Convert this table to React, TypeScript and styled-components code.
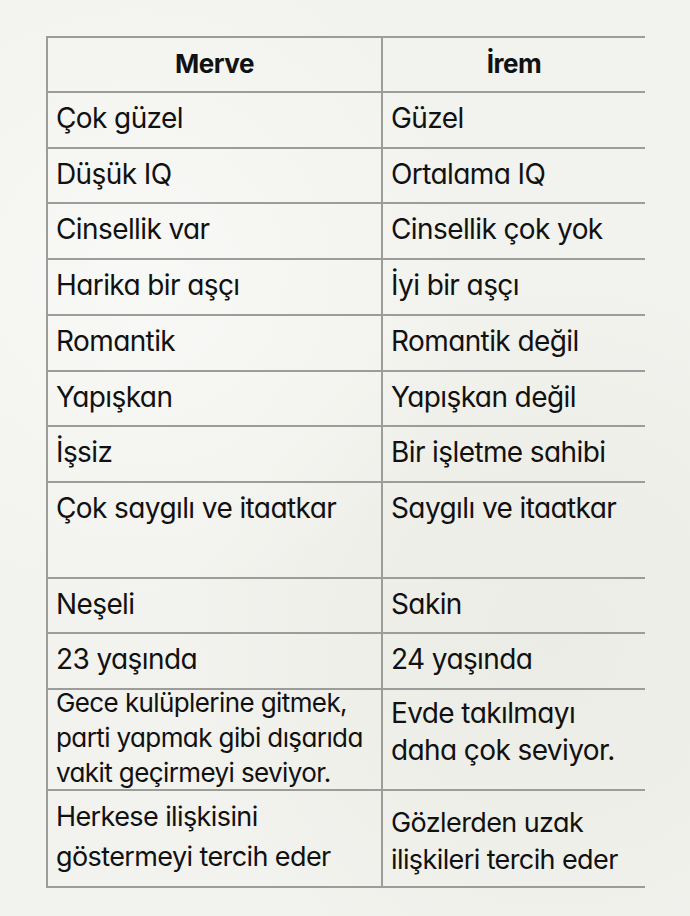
import * as React from 'react'
import styled, { createGlobalStyle } from 'styled-components'

const GlobalStyle = createGlobalStyle`
  html, body {
    margin: 0;
    padding: 0;
    background: #f2f2ee;
  }
  body {
    font-family: Inter, "Noto Sans", sans-serif;
    font-feature-settings: "cv11" 1;
    color: #111111;
  }
`

const Page = styled.div`
  width: 690px;
  height: 916px;
  padding: 36px 0 0 46px;
  box-sizing: border-box;
  background:
    radial-gradient(circle at 20% 30%, rgba(255, 255, 255, 0.5), transparent 40%),
    radial-gradient(circle at 80% 70%, rgba(230, 230, 222, 0.5), transparent 45%),
    #f2f2ee;
`

const Table = styled.div`
  width: 599px;
  display: flex;
  flex-direction: column;
  border-top: 2px solid #9c9c9a;
  border-left: 2px solid #9c9c9a;
  box-sizing: border-box;
`

const Row = styled.div<{ $height: number }>`
  display: grid;
  grid-template-columns: 333px 1fr;
  height: ${({ $height }) => $height}px;
  border-bottom: 2px solid #9c9c9a;
  box-sizing: border-box;
`

const Cell = styled.div`
  padding: 0 4px 0 8px;
  & + & {
    border-left: 2px solid #9c9c9a;
  }
`

const Lines = styled.div<{ $size: number; $lineHeight: number; $offset: number }>`
  margin-top: ${({ $offset }) => $offset}px;
  font-size: ${({ $size }) => $size}px;
  line-height: ${({ $lineHeight }) => $lineHeight}px;
  letter-spacing: -0.6px;
  white-space: pre-line;
`

const HeaderCell = styled.div`
  display: flex;
  align-items: center;
  justify-content: center;
  font-size: 26px;
  font-weight: 700;
  letter-spacing: -0.5px;
  padding-bottom: 2px;
  & + & {
    border-left: 2px solid #9c9c9a;
  }
`

type Side = { text: string; size?: number; lh?: number; offset?: number }
type Entry = { left: Side; right: Side; height: number }

const simple = (left: string, right: string, height: number): Entry => ({
  left: { text: left },
  right: { text: right },
  height,
})

const rows: Entry[] = [
  simple('Çok güzel', 'Güzel', 56),
  simple('Düşük IQ', 'Ortalama IQ', 55),
  simple('Cinsellik var', 'Cinsellik çok yok', 56),
  simple('Harika bir aşçı', 'İyi bir aşçı', 56),
  simple('Romantik', 'Romantik değil', 56),
  simple('Yapışkan', 'Yapışkan değil', 55),
  simple('İşsiz', 'Bir işletme sahibi', 56),
  simple('Çok saygılı ve itaatkar', 'Saygılı ve itaatkar', 96),
  simple('Neşeli', 'Sakin', 55),
  simple('23 yaşında', '24 yaşında', 56),
  {
    left: {
      text: 'Gece kulüplerine gitmek,\nparti yapmak gibi dışarıda\nvakit geçirmeyi seviyor.',
      size: 26,
      lh: 35,
      offset: -5,
    },
    right: { text: 'Evde takılmayı\ndaha çok seviyor.', lh: 37, offset: 5 },
    height: 101,
  },
  {
    left: { text: 'Herkese ilişkisini\ngöstermeyi tercih eder', size: 27, lh: 40, offset: 6 },
    right: { text: 'Gözlerden uzak\nilişkileri tercih eder', size: 27, lh: 37, offset: 13 },
    height: 97,
  },
]

const renderSide = (side: Side) => (
  <Cell>
    <Lines $size={side.size ?? 28} $lineHeight={side.lh ?? 38} $offset={side.offset ?? 6}>
      {side.text}
    </Lines>
  </Cell>
)

export default function App() {
  return (
    <>
      <GlobalStyle />
      <Page>
        <Table>
          <Row $height={55}>
            <HeaderCell>Merve</HeaderCell>
            <HeaderCell>İrem</HeaderCell>
          </Row>
          {rows.map((row, index) => (
            <Row key={index} $height={row.height}>
              {renderSide(row.left)}
              {renderSide(row.right)}
            </Row>
          ))}
        </Table>
      </Page>
    </>
  )
}
